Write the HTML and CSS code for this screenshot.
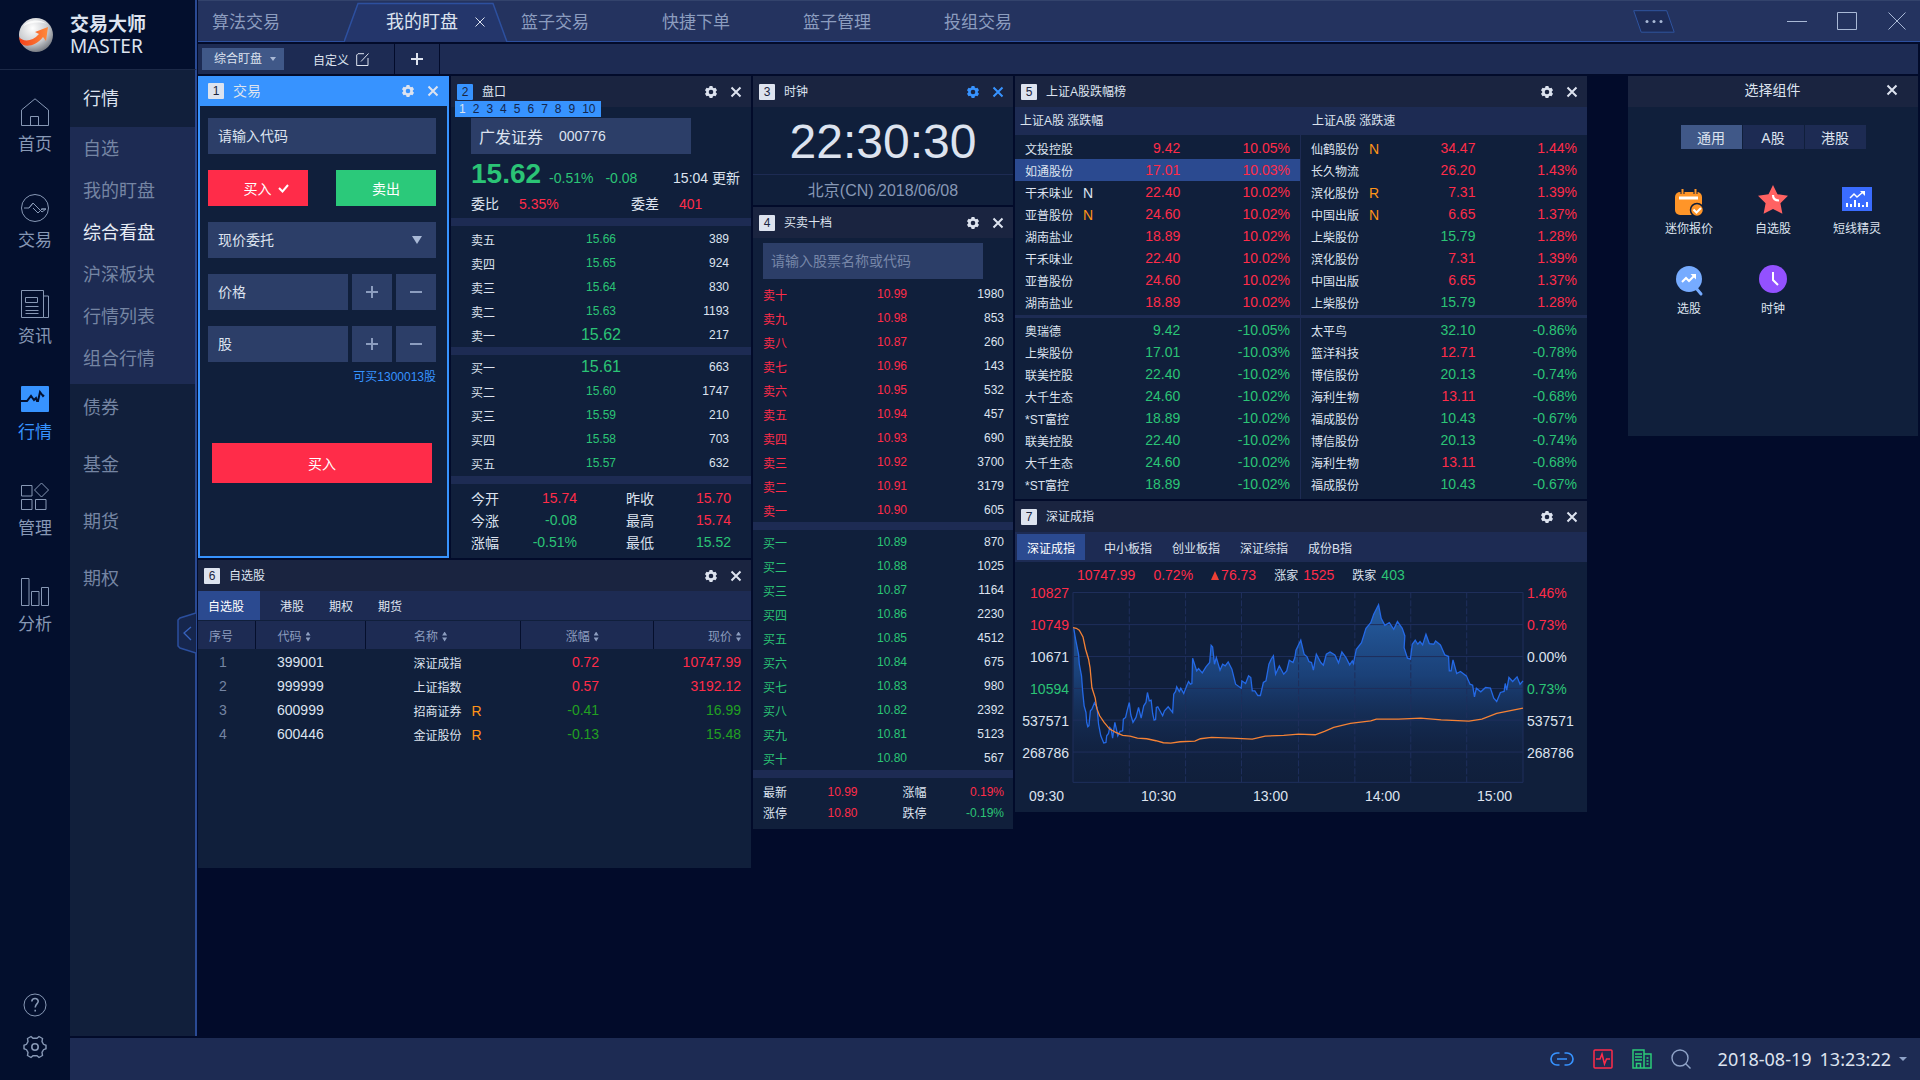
FILE: index.html
```html
<!DOCTYPE html>
<html lang="zh-CN">
<head>
  <meta charset="UTF-8">
  <title>交易大师</title>
  <link rel="stylesheet" href="styles.css">
</head>
<body>

<!-- Shared icons -->
<svg class="sprite" aria-hidden="true">
  <symbol id="i-gear" viewBox="0 0 12 12">
    <path fill="currentColor" fill-rule="evenodd" d="M4.6 0h2.8l.4 1.6 1.1.6 1.6-.5L12 4.2l-1.2 1.2v1.2L12 7.8l-1.5 2.5-1.6-.5-1.1.6-.4 1.6H4.6l-.4-1.6-1.1-.6-1.6.5L0 7.8l1.2-1.2V5.4L0 4.2l1.5-2.5 1.6.5 1.1-.6zM6 3.7a2.3 2.3 0 1 0 0 4.6 2.3 2.3 0 0 0 0-4.6z"/>
  </symbol>
  <symbol id="i-close" viewBox="0 0 12 12">
    <path fill="none" stroke="currentColor" stroke-width="2" d="M1.5 1.5l9 9M10.5 1.5l-9 9"/>
  </symbol>
</svg>

<div class="app">

  <header class="brand">
    <svg class="logo" width="40" height="40" viewBox="0 0 40 40">
      <defs>
        <radialGradient id="ball" cx=".4" cy=".3" r=".75">
          <stop offset="0" stop-color="#fff"/>
          <stop offset=".6" stop-color="#c9cbcf"/>
          <stop offset="1" stop-color="#6c7078"/>
        </radialGradient>
        <linearGradient id="arrow" x1="0" x2="1">
          <stop offset="0" stop-color="#f2401a"/>
          <stop offset="1" stop-color="#ff8a3c"/>
        </linearGradient>
      </defs>
      <circle cx="20" cy="20" r="17" fill="url(#ball)"/>
      <path d="M7 11c5-6 16-8 24-2-8-3-17-1-24 2z" fill="#fff" opacity=".8"/>
      <path fill="url(#arrow)" d="M3 22c4 5 13 5 20-3l-4-2 13-5-2 14-3-4C20 32 7 33 4 27z"/>
    </svg>
    <div class="brand-name">
      <strong>交易大师</strong>
      <span>MASTER</span>
    </div>
  </header>

  <nav class="rail">
    <a href="#" class="rail-item">
      <svg width="28" height="28" viewBox="0 0 28 28"><path d="M.5 12L14 .8 27.500 12v15.500H.5zM9.500 27.500v-9h8v9"/></svg>
      首页
    </a>
    <a href="#" class="rail-item">
      <svg width="28" height="28" viewBox="0 0 28 28"><circle cx="14" cy="14" r="13.500"/><path d="M3 14h5l4-5 9 9 4-3h-5M8 14l4-5 4 4M12 14l5 5 4-4h4"/></svg>
      交易
    </a>
    <a href="#" class="rail-item">
      <svg width="28" height="28" viewBox="0 0 28 28"><path d="M.5.500h22v27H.5zM22.500 6h5v21.500h-5M4.500 7.500h12v5h-12zM4.500 16.500h13M4.500 20.500h13M4.500 23.500h13"/></svg>
      资讯
    </a>
    <a href="#" class="rail-item active">
      <svg width="28" height="28" viewBox="0 0 28 28"><rect class="solid" width="28" height="26" rx="1"/><path class="cut" d="M0 15h6l4-5 3 4 2-2 1 3h1l2-9 3 4 1-1"/></svg>
      行情
    </a>
    <a href="#" class="rail-item">
      <svg width="28" height="28" viewBox="0 0 28 28"><path d="M.5 3.500h10.500v10.500H.5zM.5 17.500h10.500v10H.5zM14.500 17.500H25v10H14.500zM20.500 1l7 7-7 7-7-7z"/></svg>
      管理
    </a>
    <a href="#" class="rail-item">
      <svg width="28" height="28" viewBox="0 0 28 28"><path d="M.5.500h7.500v27H.5zM10.500 13.500H18v14h-7.500zM20.500 9.500h7v18h-7z"/></svg>
      分析
    </a>
    <div class="rail-foot">
      <button aria-label="帮助"><svg width="24" height="24" viewBox="0 0 24 24"><circle cx="12" cy="12" r="11"/><path stroke-width="1.600" d="M8.800 8.500c.3-4.200 6.600-3.800 6.400 0-.2 2.300-3 2.700-3 6M12.200 16.800v1.800"/></svg></button>
      <button aria-label="设置"><svg width="24" height="24" viewBox="0 0 24 24"><path stroke-width="1.400" d="M8 1.500l2 1.800h4l2-1.800 3.500 2-.5 3.200 1.500 2.600 2.500 1v3.400l-2.500 1L19 17.300l.5 3.200-3.500 2-2-1.800h-4l-2 1.800-3.500-2 .5-3.200-1.500-2.600-2.500-1v-3.400l2.500-1L5 6.700l-.5-3.200z"/><circle cx="12" cy="12" r="3.200" stroke-width="1.600"/></svg></button>
    </div>
  </nav>

  <nav class="submenu">
    <h2>行情</h2>
    <div class="submenu-group">
      <a href="#">自选</a>
      <a href="#">我的盯盘</a>
      <a href="#" class="active">综合看盘</a>
      <a href="#">沪深板块</a>
      <a href="#">行情列表</a>
      <a href="#">组合行情</a>
    </div>
    <div class="submenu-rest">
      <a href="#">债券</a>
      <a href="#">基金</a>
      <a href="#">期货</a>
      <a href="#">期权</a>
    </div>
    <button class="collapse" aria-label="收起">
      <svg width="19" height="42" viewBox="0 0 19 42"><path fill="#16264d" stroke="#2b4f9e" stroke-width="1.500" d="M19 1L3 6 1 8v26l2 2 16 5"/><path fill="none" stroke="#3763bf" stroke-width="1.300" d="M14 15l-7 6 7 7"/></svg>
    </button>
  </nav>

  <main>
    <div class="titlebar">
      <nav class="tabs">
        <a href="#" class="tab first">算法交易</a>
        <div class="tab active">
          <svg class="tab-shape" width="164" height="42" viewBox="0 0 164 42"><path fill="#24366b" stroke="#2d509f" stroke-width="1.500" d="M0 42L14 3.500h135L163 42"/></svg>
          <a href="#">我的盯盘</a>
          <button aria-label="关闭标签"><svg width="10" height="10" viewBox="0 0 10 10"><path fill="none" stroke="currentColor" d="M.5.500l9 9M9.500.500l-9 9"/></svg></button>
        </div>
        <a href="#" class="tab">篮子交易</a>
        <a href="#" class="tab">快捷下单</a>
        <a href="#" class="tab">篮子管理</a>
        <a href="#" class="tab">投组交易</a>
      </nav>
      <div class="window-tools">
        <button class="more" aria-label="更多"><svg width="42" height="23" viewBox="0 0 42 23"><path fill="#1d2b56" stroke="#2f549f" d="M.700.700h33l7.500 21.500h-33z"/><g fill="#a9b9d6"><circle cx="14" cy="11.500" r="1.500"/><circle cx="21" cy="11.500" r="1.500"/><circle cx="28" cy="11.500" r="1.500"/></g></svg></button>
        <button aria-label="最小化"><svg width="20" height="20" viewBox="0 0 20 20"><path d="M0 10.500h20"/></svg></button>
        <button aria-label="最大化"><svg width="20" height="20" viewBox="0 0 20 20"><path d="M.5 1.500h19v17H.5z"/></svg></button>
        <button aria-label="关闭"><svg width="20" height="20" viewBox="0 0 20 20"><path d="M1.500 1.500l17 17M18.500 1.500l-17 17"/></svg></button>
      </div>
    </div>

    <div class="toolbar">
      <label class="layout-pick">
        <select aria-label="版面">
          <option>综合盯盘</option>
        </select>
      </label>
      <button class="customize">自定义
        <svg width="13" height="13" viewBox="0 0 13 13"><path fill="none" stroke="currentColor" d="M8 .700H2L.700 2v10.500H12V5M5 8.500L12.500.500"/></svg>
      </button>
      <button class="add" aria-label="新增"><svg width="12" height="12" viewBox="0 0 12 12"><path stroke="currentColor" stroke-width="2" d="M6 0v12M0 6h12"/></svg></button>
    </div>

    <div class="workspace">

      <div class="stack">
        <div class="pair">

          <!-- 1 Trade -->
          <section class="panel trade">
            <div class="panel-head">
              <span class="num">1</span><h3>交易</h3>
              <button aria-label="设置"><svg><use href="#i-gear"/></svg></button>
              <button aria-label="关闭"><svg><use href="#i-close"/></svg></button>
            </div>
            <form class="trade-form">
              <input type="text" aria-label="代码" placeholder="请输入代码">
              <div class="sides">
                <button type="button" class="buy">买入 <svg width="11" height="9" viewBox="0 0 11 9"><path fill="none" stroke="currentColor" stroke-width="2" d="M1 4l3.500 3.500L10 1"/></svg></button>
                <button type="button" class="sell">卖出</button>
              </div>
              <label class="order-type">
                <select aria-label="委托方式">
                  <option>现价委托</option>
                </select>
              </label>
              <div class="stepper">
                <input type="text" aria-label="价格" placeholder="价格">
                <button type="button" class="plus" aria-label="加价"></button>
                <button type="button" class="minus" aria-label="减价"></button>
              </div>
              <div class="stepper">
                <input type="text" aria-label="数量" placeholder="股">
                <button type="button" class="plus" aria-label="加量"></button>
                <button type="button" class="minus" aria-label="减量"></button>
              </div>
              <p class="hint">可买1300013股</p>
              <button type="button" class="buy submit">买入</button>
            </form>
          </section>

          <!-- 2 Level-5 quote -->
          <section class="panel quote">
            <div class="panel-head">
              <span class="num blue">2</span><h3>盘口</h3>
              <button aria-label="设置"><svg><use href="#i-gear"/></svg></button>
              <button aria-label="关闭"><svg><use href="#i-close"/></svg></button>
              <div class="link-strip"><b>1</b><span>2</span><span>3</span><span>4</span><span>5</span><span>6</span><span>7</span><span>8</span><span>9</span><span>10</span></div>
            </div>
            <div class="quote-top">
              <div class="stock-box"><span>广发证券</span><small>000776</small></div>
              <div class="last"><b class="g">15.62</b><span class="g">-0.51%</span><span class="g">-0.08</span><time>15:04 更新</time></div>
              <div class="ratio"><span>委比</span><span class="r">5.35%</span><span>委差</span><span class="r">401</span></div>
            </div>
            <div class="bar"></div>
            <table class="depth" id="ask5"></table>
            <div class="bar"></div>
            <table class="depth" id="bid5"></table>
            <div class="bar"></div>
            <table class="summary">
              <tr><th>今开</th><td class="r">15.74</td><th>昨收</th><td class="r">15.70</td></tr>
              <tr><th>今涨</th><td class="g">-0.08</td><th>最高</th><td class="r">15.74</td></tr>
              <tr><th>涨幅</th><td class="g">-0.51%</td><th>最低</th><td class="g">15.52</td></tr>
            </table>
          </section>
        </div>

        <!-- 6 Watch list -->
        <section class="panel watch">
          <div class="panel-head">
            <span class="num">6</span><h3>自选股</h3>
            <button aria-label="设置"><svg><use href="#i-gear"/></svg></button>
            <button aria-label="关闭"><svg><use href="#i-close"/></svg></button>
          </div>
          <div class="watch-tabs">
            <button class="active">自选股</button>
            <button>港股</button>
            <button>期权</button>
            <button>期货</button>
          </div>
          <table class="watch-table">
            <colgroup><col class="c-no"><col class="c-code"><col class="c-name"><col class="c-chg"><col></colgroup>
            <thead>
              <tr><th>序号</th><th>代码<i class="sort"></i></th><th>名称<i class="sort"></i></th><th>涨幅<i class="sort"></i></th><th>现价<i class="sort"></i></th></tr>
            </thead>
            <tbody>
              <tr><td>1</td><td>399001</td><td>深证成指</td><td class="r">0.72</td><td class="r">10747.99</td></tr>
              <tr><td>2</td><td>999999</td><td>上证指数</td><td class="r">0.57</td><td class="r">3192.12</td></tr>
              <tr><td>3</td><td>600999</td><td>招商证券<em>R</em></td><td class="dg">-0.41</td><td class="dg">16.99</td></tr>
              <tr><td>4</td><td>600446</td><td>金证股份<em>R</em></td><td class="dg">-0.13</td><td class="dg">15.48</td></tr>
            </tbody>
          </table>
        </section>
      </div>

      <div class="stack">
        <!-- 3 Clock -->
        <section class="panel clock">
          <div class="panel-head">
            <span class="num">3</span><h3>时钟</h3>
            <button class="lit" aria-label="设置"><svg><use href="#i-gear"/></svg></button>
            <button class="lit" aria-label="关闭"><svg><use href="#i-close"/></svg></button>
          </div>
          <div class="clock-time">22:30:30</div>
          <div class="clock-date">北京(CN) 2018/06/08</div>
        </section>

        <!-- 4 Level-10 depth -->
        <section class="panel ten">
          <div class="panel-head">
            <span class="num">4</span><h3>买卖十档</h3>
            <button aria-label="设置"><svg><use href="#i-gear"/></svg></button>
            <button aria-label="关闭"><svg><use href="#i-close"/></svg></button>
          </div>
          <input type="text" aria-label="股票" placeholder="请输入股票名称或代码">
          <table class="depth" id="ask10"></table>
          <div class="bar"></div>
          <table class="depth" id="bid10"></table>
          <div class="bar"></div>
          <table class="summary">
            <tr><th>最新</th><td class="r">10.99</td><th>涨幅</th><td class="r">0.19%</td></tr>
            <tr><th>涨停</th><td class="r">10.80</td><th>跌停</th><td class="g">-0.19%</td></tr>
          </table>
        </section>
      </div>

      <div class="stack">
        <!-- 5 Ranking -->
        <section class="panel rank">
          <div class="panel-head">
            <span class="num">5</span><h3>上证A股跌幅榜</h3>
            <button aria-label="设置"><svg><use href="#i-gear"/></svg></button>
            <button aria-label="关闭"><svg><use href="#i-close"/></svg></button>
          </div>
          <div class="rank-cols">
            <div class="rank-col">
              <h4>上证A股 涨跌幅</h4>
              <table id="gain"></table>
              <div class="rule"></div>
              <table id="loss"></table>
            </div>
            <div class="rank-col speed">
              <h4>上证A股 涨跌速</h4>
              <table id="speedUp"></table>
              <div class="rule"></div>
              <table id="speedDown"></table>
            </div>
          </div>
        </section>

        <!-- 7 Index chart -->
        <section class="panel index">
          <div class="panel-head">
            <span class="num">7</span><h3>深证成指</h3>
            <button aria-label="设置"><svg><use href="#i-gear"/></svg></button>
            <button aria-label="关闭"><svg><use href="#i-close"/></svg></button>
          </div>
          <div class="index-tabs">
            <button class="active">深证成指</button>
            <button>中小板指</button>
            <button>创业板指</button>
            <button>深证综指</button>
            <button>成份B指</button>
          </div>
          <div class="index-stats">
            <span class="r">10747.99</span>
            <span class="r">0.72%</span>
            <span class="r"><i class="tri"></i>76.73</span>
            <span><small>涨家</small><span class="r">1525</span></span>
            <span><small>跌家</small><span class="g">403</span></span>
          </div>
          <div class="chart">
            <div class="axis left"><span class="r">10827</span><span class="r">10749</span><span>10671</span><span class="g">10594</span><span>537571</span><span>268786</span></div>
            <svg viewBox="171 303 1215 577" preserveAspectRatio="none">
              <defs>
                <linearGradient id="area" x1="0" x2="0" y1="0" y2="1">
                  <stop offset="0" stop-color="#2a69b4" stop-opacity=".85"/>
                  <stop offset=".4" stop-color="#1f4f92" stop-opacity=".7"/>
                  <stop offset=".85" stop-color="#152a52" stop-opacity=".2"/>
                  <stop offset="1" stop-color="#152a52" stop-opacity="0"/>
                </linearGradient>
              </defs>
              <path id="areaFill" fill="url(#area)"/>
              <path class="grid" d="M171 304.500H1386M171 401H1386M171 497H1386M171 593H1386M171 688H1386M171 784H1386M171 875H1386M171 304V875M1386 304V875"/>
              <path class="grid dash" d="M323 304V880M475 304V880M626 304V880M780 304V880M932 304V880M1083 304V880M1234 304V880"/>
              <polyline id="priceLine" class="price" points="173,412 178,445 186,490 188,520 194,555 197,600 201,645 206,665 208,695 211,708 214,705 218,660 222,655 229,636 236,650 240,700 246,735 254,757 260,755 262,735 267,728 270,710 274,715 278,742 284,695 292,735 298,722 305,720 307,685 313,680 317,660 323,635 327,672 333,695 341,680 348,650 355,682 362,645 368,635 372,605 377,630 382,628 386,668 390,688 394,686 396,650 400,648 413,675 418,660 428,648 440,665 443,610 448,602 451,588 458,602 462,592 470,608 478,585 483,572 488,580 492,578 494,502 505,540 510,533 520,546 530,528 540,515 544,463 548,468 553,520 558,500 568,538 575,520 582,525 590,513 600,535 610,580 625,592 627,570 637,578 645,555 651,560 655,600 662,600 670,614 677,614 685,575 692,570 700,520 706,505 712,495 718,550 728,525 740,550 748,540 755,508 765,515 770,500 773,478 786,448 795,490 803,498 808,512 815,515 820,538 828,490 840,515 847,523 855,490 865,483 878,492 888,516 897,483 908,500 918,522 925,510 928,518 936,475 950,455 962,412 975,395 983,370 996,341 1003,382 1013,403 1025,395 1037,415 1047,392 1060,412 1067,435 1065,470 1074,502 1082,505 1087,460 1095,448 1102,460 1108,452 1115,462 1124,430 1133,458 1145,460 1150,450 1163,462 1175,492 1185,497 1187,540 1192,540 1197,507 1207,548 1217,542 1233,555 1243,580 1250,583 1255,618 1260,592 1272,603 1285,590 1298,592 1307,622 1315,632 1325,605 1335,602 1338,578 1342,598 1348,560 1358,572 1370,558 1378,580 1386,570"/>
              <polyline class="volume" points="171,410 180,412 188,418 198,438 205,475 213,505 217,530 222,590 231,622 235,652 243,675 255,695 270,715 285,724 305,734 325,736 345,742 370,744 395,750 415,756 435,757 460,753 500,751 515,744 545,740 600,742 655,745 690,736 740,734 780,730 825,732 850,722 875,710 920,698 975,690 990,685 1050,685 1110,682 1165,687 1240,691 1275,685 1315,668 1386,652"/>
            </svg>
            <div class="axis right"><span class="r">1.46%</span><span class="r">0.73%</span><span>0.00%</span><span class="g">0.73%</span><span>537571</span><span>268786</span></div>
          </div>
          <div class="times"><span>09:30</span><span>10:30</span><span>13:00</span><span>14:00</span><span>15:00</span></div>
        </section>
      </div>

      <!-- Component picker -->
      <section class="panel picker">
        <div class="panel-head">
          <h3>选择组件</h3>
          <button aria-label="关闭"><svg><use href="#i-close"/></svg></button>
        </div>
        <div class="picker-tabs">
          <button class="active">通用</button>
          <button>A股</button>
          <button>港股</button>
        </div>
        <div class="picker-grid">
          <button>
            <svg width="30" height="32" viewBox="0 0 30 32">
              <rect x="1" y="7" width="27" height="23" rx="5" fill="#ff9528"/>
              <path stroke="#101e3a" stroke-width="4" d="M8.500 4v5M21.500 4v5"/>
              <path stroke="#ff9528" stroke-width="2" d="M8.500 4v6M21.500 4v6"/>
              <path stroke="#fff" stroke-width="3" d="M5 13h19"/>
              <circle cx="23" cy="25" r="6.500" fill="#ff9528" stroke="#101e3a" stroke-width="1.500"/>
              <path fill="none" stroke="#fff" stroke-width="2" d="M19.500 24.500l3 3 4.500-4.500"/>
            </svg>
            迷你报价
          </button>
          <button>
            <svg width="30" height="32" viewBox="0 0 30 32">
              <path fill="#ff6262" d="M15 0l4.500 9.300 10.500 1.500-7.600 7.400 2 10.500L15 24l-9.400 4.700 2-10.500L0 10.800l10.500-1.500z"/>
              <path fill="none" stroke="#fff" stroke-width="2.200" d="M15 10c0 4 2 5.500 6 5.500"/>
            </svg>
            自选股
          </button>
          <button>
            <svg width="30" height="32" viewBox="0 0 30 32">
              <path fill="#3a6cff" d="M0 2h30v24H0z"/>
              <path fill="none" stroke="#fff" stroke-width="1.500" d="M8 13l4-4 3 3 6-5"/>
              <path fill="#fff" d="M18 6h5v5z"/>
              <path stroke="#fff" stroke-width="2" d="M5 22v-4M9 22v-3M13 22v-7M17 22v-4M21 22v-2M25 22v-5"/>
            </svg>
            短线精灵
          </button>
          <button>
            <svg width="30" height="32" viewBox="0 0 30 32">
              <circle cx="15" cy="14" r="13" fill="#76abff"/>
              <path stroke="#76abff" stroke-width="3" stroke-linecap="round" d="M22 23l5 6"/>
              <path fill="none" stroke="#fff" stroke-width="2" d="M8 17l4-4 3 3 5-5"/>
              <path fill="#fff" d="M16.500 9H22v5.500z"/>
            </svg>
            选股
          </button>
          <button>
            <svg width="30" height="32" viewBox="0 0 30 32">
              <circle cx="15" cy="14" r="14" fill="#9351ff"/>
              <path fill="none" stroke="#fff" stroke-width="2" d="M15 7v8l5 5"/>
            </svg>
            时钟
          </button>
        </div>
      </section>

    </div>
  </main>

  <footer class="status">
    <button aria-label="连接"><svg width="24" height="14" viewBox="0 0 24 14" fill="none" stroke="#3793ff" stroke-width="1.700"><path d="M9.500 1H7a6 6 0 0 0 0 12h2.500M14.500 1H17a6 6 0 0 1 0 12h-2.500M7 7h10"/></svg></button>
    <button aria-label="行情状态"><svg width="20" height="20" viewBox="0 0 20 20" fill="none" stroke="#ff2c49" stroke-width="1.500"><rect x="1" y="1" width="18" height="18" rx="1"/><path d="M3 10h4l2-5 2.500 10 2-5H17"/></svg></button>
    <button aria-label="机构"><svg width="20" height="20" viewBox="0 0 20 20" fill="none" stroke="#2bcb78" stroke-width="1.500"><path d="M1 1h11v18H1zM12 5h7v14h-7M3 5h7M3 8h7M3 11h7M4.500 19v-4.500h4V19M14.500 9h2M14.500 12h2M14.500 15h2"/></svg></button>
    <button aria-label="搜索"><svg width="20" height="20" viewBox="0 0 20 20" fill="none" stroke="#8fa3c8" stroke-width="1.400"><circle cx="9" cy="9" r="8"/><path d="M14.500 14.500l5 5"/></svg></button>
    <time><span>2018-08-19</span><span>13:23:22</span></time>
  </footer>

</div>

<script src="script.js"></script>
</body>
</html>
```
FILE: styles.css
```css
* {
  box-sizing: border-box;
}
body {
  margin: 0;
  background: #020b2a;
  color: #dde3ef;
  font-family: "Liberation Sans", "Noto Sans CJK SC", sans-serif;
  font-size: 14px;
}
h2, h3, h4, p {
  margin: 0;
  font-weight: normal;
}
a {
  color: inherit;
  text-decoration: none;
}
button, input, select {
  margin: 0;
  padding: 0;
  border: none;
  border-radius: 0;
  background: none;
  color: inherit;
  font: inherit;
}
button {
  cursor: pointer;
}
svg {
  display: block;
}
table {
  border-collapse: collapse;
  table-layout: fixed;
  width: 100%;
}
td, th {
  padding: 0;
  font-weight: normal;
  text-align: left;
  white-space: nowrap;
}
.sprite {
  display: none;
}
.r {
  color: #ff2c49;
}
.g {
  color: #2bc476;
}
.dg {
  color: #22a022;
}

.app {
  display: grid;
  grid-template-columns: 70px 127px 1fr;
  grid-template-rows: 70px 1fr auto;
  grid-template-areas:
    "brand brand main"
    "rail submenu main"
    "rail status status";
  min-height: 100vh;
}

/* Brand */
.brand {
  grid-area: brand;
  display: flex;
  align-items: center;
  gap: 14px;
  padding-left: 16px;
  background: #030f2d;
  border-right: 2px solid #2a4a94;
  border-bottom: 1px solid #1c2947;
}
.brand-name {
  display: flex;
  flex-direction: column;
}
.brand-name strong {
  font-size: 19px;
  line-height: 22px;
}
.brand-name span {
  font-family: "Noto Sans", sans-serif;
  font-size: 19px;
  line-height: 20px;
}

/* Left rail */
.rail {
  grid-area: rail;
  display: flex;
  flex-direction: column;
  align-items: center;
  gap: 37px;
  padding: 28px 0 21px;
  background: #030f2d;
  color: #8798b5;
}
.rail-item {
  display: flex;
  flex-direction: column;
  align-items: center;
  gap: 7px;
  font-size: 17px;
  line-height: 24px;
}
.rail svg {
  fill: none;
  stroke: currentColor;
  overflow: visible;
}
.rail-item.active {
  color: #3793ff;
}
.rail svg .solid {
  fill: #3793ff;
  stroke: none;
}
.rail svg .cut {
  stroke: #030f2d;
  stroke-width: 2;
}
.rail-foot {
  display: flex;
  flex-direction: column;
  gap: 18px;
  margin-top: auto;
}

/* Second level menu */
.submenu {
  grid-area: submenu;
  position: relative;
  background: #111f3b;
  border-right: 2px solid #2a4a94;
  color: #7585a3;
  font-size: 18px;
}
.submenu h2 {
  padding: 2px 0 0 13px;
  color: #dde3ef;
  font-size: 18px;
  line-height: 55px;
}
.submenu a {
  display: block;
  padding-left: 13px;
}
.submenu-group {
  padding: 1px 0 4px;
  background: #1d2b53;
}
.submenu-group a {
  line-height: 42px;
}
.submenu-group .active {
  color: #e6ebf5;
}
.submenu-rest {
  display: flex;
  flex-direction: column;
  gap: 33px;
  padding-top: 12px;
  line-height: 24px;
}
.collapse {
  position: absolute;
  right: -1px;
  top: 542px;
}

/* Title bar */
main {
  grid-area: main;
  display: flex;
  flex-direction: column;
  gap: 2px;
  padding-left: 1px;
  min-width: 0;
}
.titlebar {
  display: flex;
  justify-content: space-between;
  height: 42px;
  background: #24335f;
  border-top: 1px solid #33436c;
  border-bottom: 1px solid #2d509f;
  color: #8c9dbf;
}
.tabs {
  display: flex;
  font-size: 17px;
  line-height: 44px;
}
.tab {
  width: 141px;
  padding-left: 14px;
}
.tab.first {
  width: 146px;
}
.tab.active {
  position: relative;
  display: flex;
  align-items: center;
  gap: 17px;
  width: 163px;
  padding: 2px 0 0 42px;
  color: #dde3ef;
  font-size: 18px;
}
.tab.active a, .tab.active button {
  position: relative;
}
.tab-shape {
  position: absolute;
  left: 0;
  top: -1px;
}
.window-tools {
  display: flex;
  align-items: center;
  gap: 30px;
  padding-right: 13px;
}
.window-tools svg {
  fill: none;
  stroke: #a9b9d6;
}
.window-tools .more {
  margin-right: 82px;
}
.window-tools .more g {
  stroke: none;
}

/* Toolbar */
.toolbar {
  display: flex;
  align-items: center;
  height: 30px;
  margin-right: 2px;
  background: #1d2b53;
  font-size: 12px;
}
.layout-pick, .order-type {
  position: relative;
  display: block;
}
.layout-pick select, .order-type select {
  appearance: none;
}
.layout-pick::after, .order-type::after {
  content: "";
  position: absolute;
  border: solid transparent;
  border-top-color: #a9b9d6;
  border-bottom: none;
  pointer-events: none;
}
.layout-pick {
  margin-left: 4px;
}
.layout-pick select {
  width: 82px;
  height: 22px;
  padding-left: 12px;
  background: #405888;
}
.layout-pick::after {
  right: 8px;
  top: 9px;
  border-width: 4px 3px 0;
}
.customize {
  display: flex;
  align-items: center;
  gap: 7px;
  height: 30px;
  padding: 0 25px 0 29px;
}
.add {
  height: 30px;
  padding: 0 16px;
  border: solid #020b2a;
  border-width: 0 1px;
}

/* Panels */
.workspace {
  display: grid;
  grid-template-columns: 553fr 260fr 572fr 329fr;
  align-items: start;
  gap: 2px;
  padding-right: 2px;
}
.stack {
  display: flex;
  flex-direction: column;
  gap: 2px;
  min-width: 0;
}
.pair {
  display: grid;
  grid-template-columns: minmax(0, 251fr) minmax(0, 300fr);
  gap: 2px;
}
.panel {
  background: #101f3b;
}
.panel-head {
  position: relative;
  display: flex;
  align-items: center;
  height: 31px;
  padding: 0 9px 0 6px;
  background: #1a2440;
}
.panel-head .num {
  width: 16px;
  height: 16px;
  border-radius: 1px;
  background: #dde3ef;
  color: #1a2440;
  font-size: 12px;
  line-height: 16px;
  text-align: center;
}
.panel-head .num.blue {
  background: #3793ff;
}
.panel-head h3 {
  flex: 1;
  margin-left: 9px;
  font-size: 12px;
  line-height: 16px;
}
.panel-head button {
  margin-left: 13px;
}
.panel-head button svg {
  width: 12px;
  height: 12px;
}
.panel-head .lit {
  color: #3793ff;
}
.bar {
  height: 8px;
  background: #1d2b53;
}

/* Trade */
.trade {
  border: 2px solid #3793ff;
}
.trade .panel-head {
  height: 28px;
  padding: 0 8px 2px;
  background: #3793ff;
}
.trade .panel-head h3 {
  font-size: 14px;
}
.trade-form {
  display: flex;
  flex-direction: column;
  gap: 16px;
  padding: 12px 11px 16px 8px;
}
.trade-form input, .ten > input {
  height: 36px;
  min-width: 0;
  padding-left: 10px;
  background: #2c3e68;
}
.trade-form input::placeholder {
  color: #dde3ef;
}
.sides {
  display: flex;
  justify-content: space-between;
}
.buy, .sell {
  display: flex;
  align-items: center;
  justify-content: center;
  gap: 6px;
  width: 100px;
  height: 36px;
  background: #ff2c49;
  color: #fff;
}
.sides .buy {
  padding-left: 16px;
}
.sell {
  background: #2bc97a;
}
.order-type select {
  width: 100%;
  height: 36px;
  padding-left: 10px;
  background: #2c3e68;
}
.order-type::after {
  right: 14px;
  top: 14px;
  border-width: 8px 5px 0;
}
.stepper {
  display: flex;
  gap: 4px;
}
.stepper input {
  flex: 1;
}
.stepper button {
  width: 40px;
  background: linear-gradient(#8c9dbf, #8c9dbf) center / 12px 2px no-repeat #2c3e68;
}
.stepper .plus {
  background: linear-gradient(#8c9dbf, #8c9dbf) center / 12px 2px no-repeat, linear-gradient(#8c9dbf, #8c9dbf) center / 2px 12px no-repeat #2c3e68;
}
.hint {
  margin-top: -8px;
  color: #3793ff;
  font-size: 12px;
  line-height: 14px;
  text-align: right;
}
.submit {
  width: auto;
  height: 40px;
  margin: 43px 4px 0;
}

/* Level-5 quote */
.link-strip {
  position: absolute;
  left: 4px;
  top: 25px;
  display: flex;
  gap: 7px;
  padding: 0 5px 0 4px;
  background: #3793ff;
  color: #14264d;
  font-size: 12px;
  line-height: 16px;
}
.link-strip b {
  color: #dde3ef;
  font-weight: normal;
}
.quote-top {
  padding: 11px 11px 1px 20px;
}
.stock-box {
  display: flex;
  align-items: center;
  gap: 16px;
  width: 220px;
  max-width: 100%;
  height: 36px;
  padding-left: 8px;
  background: #2c3e68;
  font-size: 16px;
}
.stock-box small {
  font-size: 14px;
}
.last {
  display: flex;
  align-items: baseline;
  height: 34px;
  margin-top: 3px;
  line-height: 34px;
  white-space: nowrap;
}
.last b {
  margin-right: 8px;
  font-size: 28px;
}
.last span {
  margin-right: 12px;
}
.last time {
  margin-left: auto;
}
.ratio {
  display: grid;
  grid-template-columns: 48px 112px 48px 1fr;
  line-height: 26px;
}
.depth {
  font-size: 12px;
}
.depth td {
  height: 24px;
}
.depth td:first-child {
  width: 38%;
  padding-left: 20px;
}
.depth td:nth-child(2) {
  text-align: center;
}
.depth td:last-child {
  width: 38%;
  padding-right: 22px;
  text-align: right;
}
.depth td.big {
  font-size: 16px;
  line-height: 20px;
}
#ask5 {
  margin-top: 1px;
}
#bid5 {
  margin-bottom: 1px;
}
.summary {
  margin: 3px 0 5px;
}
.summary th, .summary td {
  height: 22px;
}
.summary th {
  width: 20%;
  padding-left: 20px;
}
.summary td {
  width: 22%;
  text-align: right;
}
.summary th + td + th {
  width: 32%;
  padding-left: 49px;
}
.summary td:last-child {
  width: 26%;
  padding-right: 20px;
}

/* Watch list */
.watch {
  min-height: 308px;
}
.watch-tabs, .index-tabs {
  display: flex;
  background: #1d2b53;
  font-size: 12px;
}
.watch-tabs button {
  height: 29px;
  padding: 0 12px 0 13px;
}
.watch-tabs .active {
  width: 62px;
  margin-right: 7px;
  padding: 0 6px 0 0;
  background: #2b4a90;
  color: #fff;
}
.watch-table {
  margin-top: 1px;
}
.c-no { width: 57px; }
.c-code { width: 20%; }
.c-name { width: 28%; }
.c-chg { width: 24%; }
.watch-table th {
  height: 28px;
  border-right: 1px solid #050f2c;
  background: #1d2b53;
  color: #8c9dbf;
  font-size: 12px;
}
.watch-table th:last-child {
  border-right: none;
}
.watch-table tbody::before {
  content: "";
  display: block;
  height: 1px;
}
.watch-table td {
  height: 24px;
}
.watch-table th:nth-child(1) {
  padding-left: 11px;
}
.watch-table td:nth-child(1) {
  padding-left: 21px;
  color: #7585a3;
}
.watch-table th:nth-child(2), .watch-table td:nth-child(2) {
  padding-left: 22px;
}
.watch-table th:nth-child(3), .watch-table td:nth-child(3) {
  padding-left: 48px;
}
.watch-table td:nth-child(3) {
  font-size: 12px;
}
.watch-table th:nth-child(4), .watch-table td:nth-child(4) {
  padding-right: 54px;
  text-align: right;
}
.watch-table th:nth-child(5), .watch-table td:nth-child(5) {
  padding-right: 10px;
  text-align: right;
}
.watch-table em, .rank em {
  margin-left: 10px;
  color: #ff9418;
  font-size: 14px;
  font-style: normal;
}
.rank em.plain {
  color: #dde3ef;
}
.sort {
  display: inline-block;
  width: 5px;
  height: 10px;
  margin-left: 4px;
  background: #8c9dbf;
  clip-path: polygon(50% 0, 100% 40%, 0 40%, 0 60%, 100% 60%, 50% 100%, 0 60%, 0 40%);
  vertical-align: -1px;
}

/* Clock */
.clock-time {
  padding-top: 2px;
  font-size: 48px;
  line-height: 65px;
  text-align: center;
}
.clock-date {
  padding-top: 2px;
  border-top: 1px solid #1d2b53;
  color: #8798b5;
  font-size: 16px;
  line-height: 28px;
  text-align: center;
}

/* Level-10 depth */
.ten > input {
  display: block;
  width: 220px;
  max-width: 90%;
  margin: 5px 0 3px 10px;
  padding-left: 8px;
}
.ten > input::placeholder {
  color: #7787a8;
}
.ten .depth td:first-child {
  padding-left: 10px;
}
.ten .depth td:nth-child(2) {
  padding-left: 18px;
}
.ten .depth td:last-child {
  padding-right: 9px;
}
.ten .summary {
  margin: 3px 0 6px;
  font-size: 12px;
}
.ten .summary th, .ten .summary td {
  height: 21px;
}
.ten .summary th:first-child {
  width: 17%;
  padding-left: 10px;
}
.ten .summary td:last-child {
  padding-right: 9px;
}
.ten .summary th + td + th {
  padding-left: 45px;
}

/* Ranking */
.rank-cols {
  display: grid;
  grid-template-columns: 1fr 1fr;
}
.rank-col {
  padding-bottom: 4px;
}
.rank-col:first-child {
  border-right: 1px solid #1d2b53;
}
.rank h4 {
  margin-bottom: 2px;
  padding-left: 5px;
  background: #1d2b53;
  font-size: 12px;
  line-height: 28px;
}
.rank .speed h4 {
  padding-left: 11px;
}
.rank td {
  width: 21%;
  height: 22px;
  text-align: right;
}
.rank td:first-child {
  width: 37%;
  padding-left: 10px;
  font-size: 12px;
  text-align: left;
}
.rank .speed td:first-child {
  width: 40%;
}
.rank td:last-child {
  width: auto;
  padding-right: 10px;
}
.rank .selected {
  background: #2b4a90;
}
.rule {
  height: 3px;
  margin: 2px 0 1px;
  background: #1d2b53;
}

/* Index chart */
.index-tabs {
  padding: 2px;
}
.index-tabs button {
  height: 26px;
  padding: 0 10px;
}
.index-tabs .active {
  margin-right: 9px;
  background: #2b4a90;
  color: #fff;
}
.index-stats {
  display: flex;
  gap: 18px;
  padding: 4px 0 0 62px;
  line-height: 18px;
}
.index-stats small {
  margin-right: 5px;
  font-size: 12px;
}
.tri {
  display: inline-block;
  margin-right: 2px;
  border: solid transparent;
  border-width: 0 4px 9px;
  border-bottom-color: #ee4035;
}
.chart {
  display: grid;
  grid-template-columns: 54px 1fr 60px;
  column-gap: 4px;
}
.axis {
  display: flex;
  flex-direction: column;
  gap: 16px;
  line-height: 16px;
}
.axis.left {
  text-align: right;
}
.chart svg {
  width: 100%;
  height: 192px;
  margin-top: 7px;
  overflow: visible;
}
.chart .grid, .chart .price, .chart .volume {
  fill: none;
  vector-effect: non-scaling-stroke;
}
.chart .grid {
  stroke: #1f2f5c;
}
.chart .dash {
  stroke-dasharray: 6 2;
}
.chart .price {
  stroke: #2469e6;
  stroke-width: 1.3px;
}
.chart .volume {
  stroke: #f58235;
  stroke-width: 1.3px;
}
.times {
  display: flex;
  justify-content: space-between;
  padding: 4px 75px 8px 14px;
  line-height: 16px;
}

/* Component picker */
.picker {
  min-height: 360px;
  margin-left: 39px;
}
.picker .panel-head {
  padding: 0 20px 3px 6px;
}
.picker .panel-head h3 {
  margin-left: 38px;
  font-size: 14px;
  text-align: center;
}
.picker-tabs {
  display: flex;
  justify-content: center;
  gap: 1px;
  margin-top: 18px;
}
.picker-tabs button {
  width: 61px;
  height: 24px;
  background: #1d2b53;
}
.picker-tabs .active {
  background: #405888;
}
.picker-grid {
  display: grid;
  grid-template-columns: repeat(3, 84px);
  justify-content: center;
  row-gap: 25px;
  margin-top: 36px;
  font-size: 12px;
}
.picker-grid button {
  display: flex;
  flex-direction: column;
  align-items: center;
  gap: 1px;
  line-height: 22px;
}

/* Status bar */
.status {
  grid-area: status;
  display: flex;
  align-items: center;
  justify-content: flex-end;
  gap: 19px;
  height: 44px;
  padding-right: 13px;
  border-top: 2px solid #020b2a;
  background: #1d2b53;
}
.status time {
  display: flex;
  align-items: center;
  gap: 8px;
  margin-left: 8px;
  font-family: "Noto Sans", sans-serif;
  font-size: 18px;
}
.status time::after {
  content: "";
  border: solid transparent;
  border-width: 4px 4px 0;
  border-top-color: #8fa3c8;
}
```
FILE: script.js
```js
const CN = ['一', '二', '三', '四', '五', '六', '七', '八', '九', '十'];

// rows: [price, volume]; side is 卖 or 买
function fillDepth(id, side, cls, rows, nameCls) {
  const n = rows.length;
  document.getElementById(id).innerHTML = rows.map(([price, vol], i) => {
    const level = side === '卖' ? n - 1 - i : i;
    const big = n === 5 && level === 0 ? ' big' : '';
    return `<tr><td class="${nameCls}">${side}${CN[level]}</td><td class="${cls}${big}">${price}</td><td>${vol}</td></tr>`;
  }).join('');
}

fillDepth('ask5', '卖', 'g', [['15.66', 389], ['15.65', 924], ['15.64', 830], ['15.63', 1193], ['15.62', 217]], '');
fillDepth('bid5', '买', 'g', [['15.61', 663], ['15.60', 1747], ['15.59', 210], ['15.58', 703], ['15.57', 632]], '');
fillDepth('ask10', '卖', 'r', [
  ['10.99', 1980], ['10.98', 853], ['10.87', 260], ['10.96', 143], ['10.95', 532],
  ['10.94', 457], ['10.93', 690], ['10.92', 3700], ['10.91', 3179], ['10.90', 605]
], 'r');
fillDepth('bid10', '买', 'g', [
  ['10.89', 870], ['10.88', 1025], ['10.87', 1164], ['10.86', 2230], ['10.85', 4512],
  ['10.84', 675], ['10.83', 980], ['10.82', 2392], ['10.81', 5123], ['10.80', 567]
], 'g');

// rows: [name, price, change, price colour, flag]
function fillRank(id, cls, rows, selected) {
  document.getElementById(id).innerHTML = rows.map(([name, price, pct, priceCls, flag], i) => {
    const mark = flag ? `<em class="${flag === 'n' ? 'plain' : ''}">${flag.toUpperCase()}</em>` : '';
    return `<tr class="${i === selected ? 'selected' : ''}"><td>${name}${mark}</td><td class="${priceCls}">${price}</td><td class="${cls}">${pct}</td></tr>`;
  }).join('');
}

fillRank('gain', 'r', [
  ['文投控股', '9.42', '10.05%', 'r'],
  ['如通股份', '17.01', '10.03%', 'r'],
  ['干禾味业', '22.40', '10.02%', 'r', 'n'],
  ['亚普股份', '24.60', '10.02%', 'r', 'N'],
  ['湖南盐业', '18.89', '10.02%', 'r'],
  ['干禾味业', '22.40', '10.02%', 'r'],
  ['亚普股份', '24.60', '10.02%', 'r'],
  ['湖南盐业', '18.89', '10.02%', 'r']
], 1);
fillRank('loss', 'g', [
  ['奥瑞德', '9.42', '-10.05%', 'g'],
  ['上柴股份', '17.01', '-10.03%', 'g'],
  ['联美控股', '22.40', '-10.02%', 'g'],
  ['大千生态', '24.60', '-10.02%', 'g'],
  ['*ST富控', '18.89', '-10.02%', 'g'],
  ['联美控股', '22.40', '-10.02%', 'g'],
  ['大千生态', '24.60', '-10.02%', 'g'],
  ['*ST富控', '18.89', '-10.02%', 'g']
]);
fillRank('speedUp', 'r', [
  ['仙鹤股份', '34.47', '1.44%', 'r', 'N'],
  ['长久物流', '26.20', '1.43%', 'r'],
  ['滨化股份', '7.31', '1.39%', 'r', 'R'],
  ['中国出版', '6.65', '1.37%', 'r', 'N'],
  ['上柴股份', '15.79', '1.28%', 'g'],
  ['滨化股份', '7.31', '1.39%', 'r'],
  ['中国出版', '6.65', '1.37%', 'r'],
  ['上柴股份', '15.79', '1.28%', 'g']
]);
fillRank('speedDown', 'g', [
  ['太平鸟', '32.10', '-0.86%', 'g'],
  ['篮洋科技', '12.71', '-0.78%', 'r'],
  ['博信股份', '20.13', '-0.74%', 'g'],
  ['海利生物', '13.11', '-0.68%', 'r'],
  ['福成股份', '10.43', '-0.67%', 'g'],
  ['博信股份', '20.13', '-0.74%', 'g'],
  ['海利生物', '13.11', '-0.68%', 'r'],
  ['福成股份', '10.43', '-0.67%', 'g']
]);

// Close the price line down to the axis for the shaded area
const points = document.getElementById('priceLine').getAttribute('points');
document.getElementById('areaFill').setAttribute('d', 'M171 875L' + points + 'L1386 875Z');
```
